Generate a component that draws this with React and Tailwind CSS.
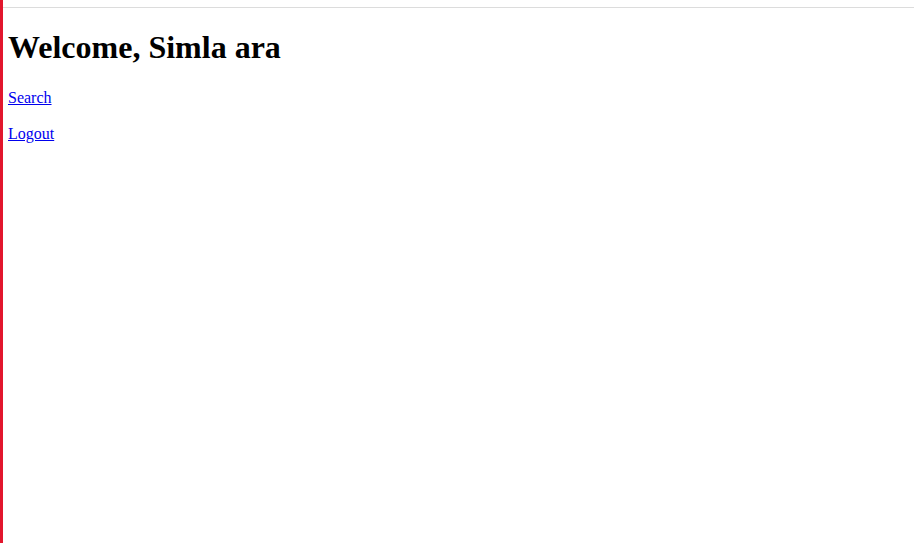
export default function App() {
  return (
    <div className="min-h-[543px] border-l-[3px] border-[#e2162d] bg-white font-['Liberation_Serif',serif] text-black">
      {/* top rule under the (empty) nav bar */}
      <div className="h-[8px] border-b border-[#dcdcdc]" />
      <div className="px-[5px]">
        <h1 className="mt-[21px] mb-[22px] text-[32px] font-bold leading-[37px]">Welcome, Simla ara</h1>
        <p className="my-4 text-base leading-[20px]">
          <a href="#" className="text-[#0000ee] underline">Search</a>
        </p>
        <p className="my-4 text-base leading-[20px]">
          <a href="#" className="text-[#0000ee] underline">Logout</a>
        </p>
      </div>
    </div>
  );
}
